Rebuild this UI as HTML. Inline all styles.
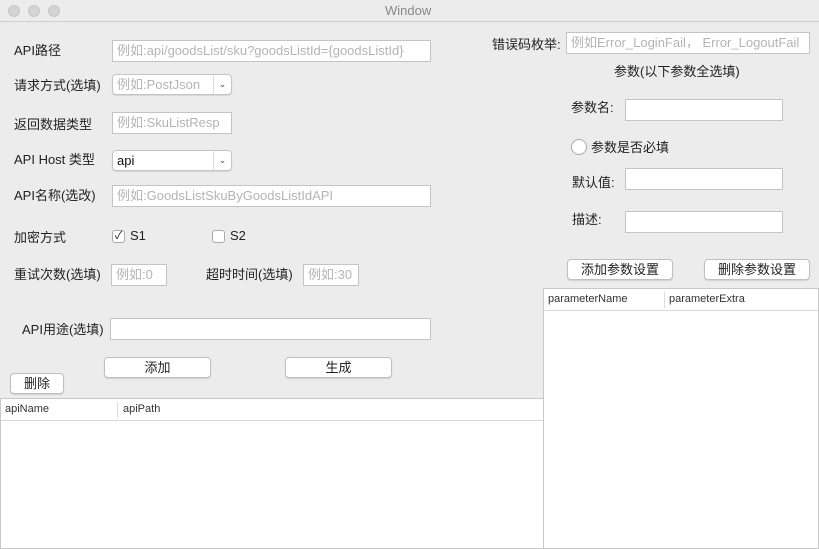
<!DOCTYPE html>
<html><head><meta charset="utf-8"><style>
*{box-sizing:border-box;margin:0;padding:0}
body{width:819px;height:549px;background:#ececec;font-family:"Liberation Sans","Noto Sans CJK SC",sans-serif;font-size:13px;color:#222;position:relative;overflow:hidden}
.a{position:absolute}
.lb{position:absolute;line-height:16px;white-space:nowrap}
.in{position:absolute;background:#fff;border:1px solid #c4c4c4;color:#b4b4b4;padding-left:4px;white-space:nowrap;overflow:hidden;font-size:13px}
.sel{position:absolute;background:#fff;border:1px solid #c4c4c4;border-radius:4px;box-shadow:0 1px 1px rgba(0,0,0,.1);padding-left:4px;color:#b4b4b4;white-space:nowrap}
.sel .ar{position:absolute;right:0;top:0;bottom:0;width:18px;border-left:1px solid #ddd;text-align:center;font-size:9px;color:#444}
.btn{position:absolute;background:#fff;border:1px solid #c0c0c0;border-radius:4px;box-shadow:0 1px 1px rgba(0,0,0,.12);text-align:center;color:#222}
.cb{position:absolute;width:13px;height:13px;background:#fff;border:1px solid #aaa;border-radius:3px;font-size:11px;line-height:11px;text-align:center}
.tbl{position:absolute;background:#fff;border:1px solid #c8c8c8}
.th{position:absolute;left:0;right:0;top:0;height:22px;border-bottom:1px solid #d8d8d8;font-size:11px;color:#333}
</style></head><body>
<div class="a" style="left:0;top:0;width:819px;height:22px;background:#ececec;border-bottom:1px solid #d0d0d0"></div>
<div class="a" style="left:8px;top:5px;width:12px;height:12px;border-radius:50%;background:#d4d4d4;border:1px solid #c6c6c6"></div>
<div class="a" style="left:28px;top:5px;width:12px;height:12px;border-radius:50%;background:#d4d4d4;border:1px solid #c6c6c6"></div>
<div class="a" style="left:48px;top:5px;width:12px;height:12px;border-radius:50%;background:#d4d4d4;border:1px solid #c6c6c6"></div>
<div class="lb" style="left:385px;top:3px;color:#888">Window</div>

<div class="lb" style="left:14px;top:43px">API路径</div>
<div class="in" style="left:112px;top:40px;width:319px;height:22px;line-height:20px">例如:api/goodsList/sku?goodsListId={goodsListId}</div>
<div class="lb" style="left:14px;top:78px">请求方式(选填)</div>
<div class="sel" style="left:112px;top:74px;width:120px;height:21px;line-height:19px">例如:PostJson<span class="ar">&#8964;</span></div>
<div class="lb" style="left:14px;top:117px">返回数据类型</div>
<div class="in" style="left:112px;top:112px;width:120px;height:22px;line-height:20px">例如:SkuListResp</div>
<div class="lb" style="left:14px;top:152px">API Host 类型</div>
<div class="sel" style="left:112px;top:150px;width:120px;height:21px;line-height:19px;color:#111">api<span class="ar">&#8964;</span></div>
<div class="lb" style="left:14px;top:188px">API名称(选改)</div>
<div class="in" style="left:112px;top:185px;width:319px;height:22px;line-height:20px">例如:GoodsListSkuByGoodsListIdAPI</div>
<div class="lb" style="left:14px;top:230px">加密方式</div>
<div class="cb" style="left:112px;top:230px">✓</div><div class="lb" style="left:130px;top:228px">S1</div>
<div class="cb" style="left:212px;top:230px"></div><div class="lb" style="left:230px;top:228px">S2</div>
<div class="lb" style="left:14px;top:267px">重试次数(选填)</div>
<div class="in" style="left:111px;top:264px;width:56px;height:22px;line-height:20px">例如:0</div>
<div class="lb" style="left:206px;top:267px">超时时间(选填)</div>
<div class="in" style="left:303px;top:264px;width:56px;height:22px;line-height:20px">例如:30</div>
<div class="lb" style="left:22px;top:322px">API用途(选填)</div>
<div class="in" style="left:110px;top:318px;width:321px;height:22px"></div>
<div class="btn" style="left:104px;top:357px;width:107px;height:21px;line-height:19px">添加</div>
<div class="btn" style="left:285px;top:357px;width:107px;height:21px;line-height:19px">生成</div>
<div class="btn" style="left:10px;top:373px;width:54px;height:21px;line-height:19px">删除</div>
<div class="tbl" style="left:0;top:398px;width:544px;height:151px"><div class="th"><span class="a" style="left:4px;top:4px">apiName</span><span class="a" style="left:116px;top:3px;height:16px;border-left:1px solid #ddd"></span><span class="a" style="left:122px;top:4px">apiPath</span></div></div>

<div class="lb" style="left:492px;top:37px">错误码枚举:</div>
<div class="in" style="left:566px;top:32px;width:244px;height:22px;line-height:20px">例如Error_LoginFail， Error_LogoutFail</div>
<div class="lb" style="left:614px;top:64px">参数(以下参数全选填)</div>
<div class="lb" style="left:571px;top:100px">参数名:</div>
<div class="in" style="left:625px;top:99px;width:158px;height:22px"></div>
<div class="a" style="left:571px;top:139px;width:16px;height:16px;border-radius:50%;background:#fff;border:1px solid #aaa"></div>
<div class="lb" style="left:591px;top:140px">参数是否必填</div>
<div class="lb" style="left:572px;top:175px">默认值:</div>
<div class="in" style="left:625px;top:168px;width:158px;height:22px"></div>
<div class="lb" style="left:572px;top:212px">描述:</div>
<div class="in" style="left:625px;top:211px;width:158px;height:22px"></div>
<div class="btn" style="left:567px;top:259px;width:106px;height:21px;line-height:19px">添加参数设置</div>
<div class="btn" style="left:704px;top:259px;width:106px;height:21px;line-height:19px">删除参数设置</div>
<div class="tbl" style="left:543px;top:288px;width:276px;height:261px"><div class="th"><span class="a" style="left:4px;top:4px">parameterName</span><span class="a" style="left:120px;top:3px;height:16px;border-left:1px solid #ddd"></span><span class="a" style="left:125px;top:4px">parameterExtra</span></div></div>
</body></html>
